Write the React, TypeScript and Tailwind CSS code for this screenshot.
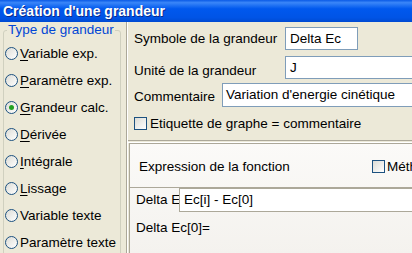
import React from "react";

const Radio = ({ checked }: { checked?: boolean }) => (
  <span className="relative inline-block w-[13px] h-[13px] rounded-full border border-[#1c5180] bg-[linear-gradient(135deg,#dcdcd6,#ffffff)] shrink-0">
    {checked && (
      <span className="absolute left-[3px] top-[3px] w-[5px] h-[5px] rounded-full bg-[#21a121]" />
    )}
  </span>
);

const Check = () => (
  <span className="inline-block w-[13px] h-[13px] border border-[#1c5180] bg-[linear-gradient(135deg,#dcdcd6,#ffffff)] shrink-0" />
);

const items: { label: string; u?: number; checked?: boolean }[] = [
  { label: "Variable exp.", u: 0 },
  { label: "Paramètre exp.", u: 0 },
  { label: "Grandeur calc.", u: 0, checked: true },
  { label: "Dérivée", u: 0 },
  { label: "Intégrale", u: 0 },
  { label: "Lissage", u: 0 },
  { label: "Variable texte" },
  { label: "Paramètre texte" },
];

export default function App() {
  return (
    <div
      className="w-[412px] h-[253px] overflow-hidden flex flex-col bg-[#ece9d8] text-[13.5px] text-black leading-none"
      style={{ fontFamily: '"Liberation Sans", Arial, sans-serif' }}
    >
      <div className="h-[22px] shrink-0 flex items-center pl-[3px] bg-[linear-gradient(180deg,#0a5ae6_0%,#3a86f8_12%,#0058ee_40%,#0054e6_80%,#004ad2_100%)]">
        <span className="text-white font-bold text-[14px] [text-shadow:1px_1px_0_#0a2a8a]">
          Création d'une grandeur
        </span>
      </div>
      <div className="flex flex-1 min-h-0">
        {/* left */}
        <div className="w-[127px] shrink-0 pl-[3px] pr-[5px] pt-[8px] border-r border-[#aca899]">
          <div className="relative h-[240px] border border-[#d0d0bf] rounded-[3px]">
            <span className="absolute left-[3px] -top-[8px] bg-[#ece9d8] px-[1px] text-[#0046d5]">
              Type de grandeur
            </span>
            <div className="flex flex-col pt-[16px] pl-[1px] gap-[14px]">
              {items.map((it) => (
                <div key={it.label} className="flex items-center gap-[2px] h-[13px]">
                  <Radio checked={it.checked} />
                  <span className="whitespace-nowrap">
                    {it.u === 0 ? (
                      <>
                        <span className="underline underline-offset-2">{it.label[0]}</span>
                        {it.label.slice(1)}
                      </>
                    ) : (
                      it.label
                    )}
                  </span>
                </div>
              ))}
            </div>
          </div>
        </div>
        {/* right */}
        <div className="flex-1 flex flex-col min-w-0 border-l border-white">
          <div className="h-[118px] shrink-0 flex flex-col pl-[6px] pt-[5px]">
            <div className="flex items-center h-[23px]">
              <span className="w-[151px] whitespace-nowrap">Symbole de la grandeur</span>
              <div className="w-[73px] h-[23px] bg-white border border-[#7f9db9] flex items-center pl-[4px]">
                Delta Ec
              </div>
            </div>
            <div className="flex items-center h-[23px] mt-[6px]">
              <span className="w-[151px] whitespace-nowrap pt-[7px]">Unité de la grandeur</span>
              <div className="flex-1 h-[23px] bg-white border border-[#7f9db9] border-r-0 flex items-center pl-[4px]">
                J
              </div>
            </div>
            <div className="flex items-center h-[24px] mt-[4px]">
              <span className="w-[88px] whitespace-nowrap pt-[4px]">Commentaire</span>
              <div className="flex-1 h-[24px] bg-white border border-[#7f9db9] border-r-0 flex items-center pl-[3px] whitespace-nowrap overflow-hidden">
                Variation d'energie cinétique
              </div>
            </div>
            <div className="flex items-center h-[13px] mt-[10px]">
              <Check />
              <span className="ml-[3px] whitespace-nowrap">Etiquette de graphe = commentaire</span>
            </div>
          </div>
          <div className="h-[3px] shrink-0 border-t border-[#aca899] border-b border-b-white" />
          <div className="flex-1 flex flex-col border-t border-l border-[#aca899] ml-[1px] bg-[linear-gradient(180deg,#fbfaf8,#f4f2ee)]">
            <div className="h-[44px] shrink-0 flex items-center pl-[9px] pt-[2px] border-b border-[#aca899]">
              <span className="whitespace-nowrap">Expression de la fonction</span>
              <div className="ml-auto flex items-center mr-[-20px] w-[60px]">
                <Check />
                <span className="ml-[2px] whitespace-nowrap">Méthode</span>
              </div>
            </div>
            <div className="flex items-center h-[24px]">
              <span className="w-[49px] pl-[6px] whitespace-nowrap overflow-hidden">Delta Ec</span>
              <div className="flex-1 h-[24px] bg-white border-y border-l border-[#aca899] flex items-center pl-[4px] whitespace-nowrap">
                Ec[i] - Ec[0]
              </div>
            </div>
            <div className="pl-[6px] pt-[9px] whitespace-nowrap">Delta Ec[0]=</div>
          </div>
        </div>
      </div>
    </div>
  );
}
